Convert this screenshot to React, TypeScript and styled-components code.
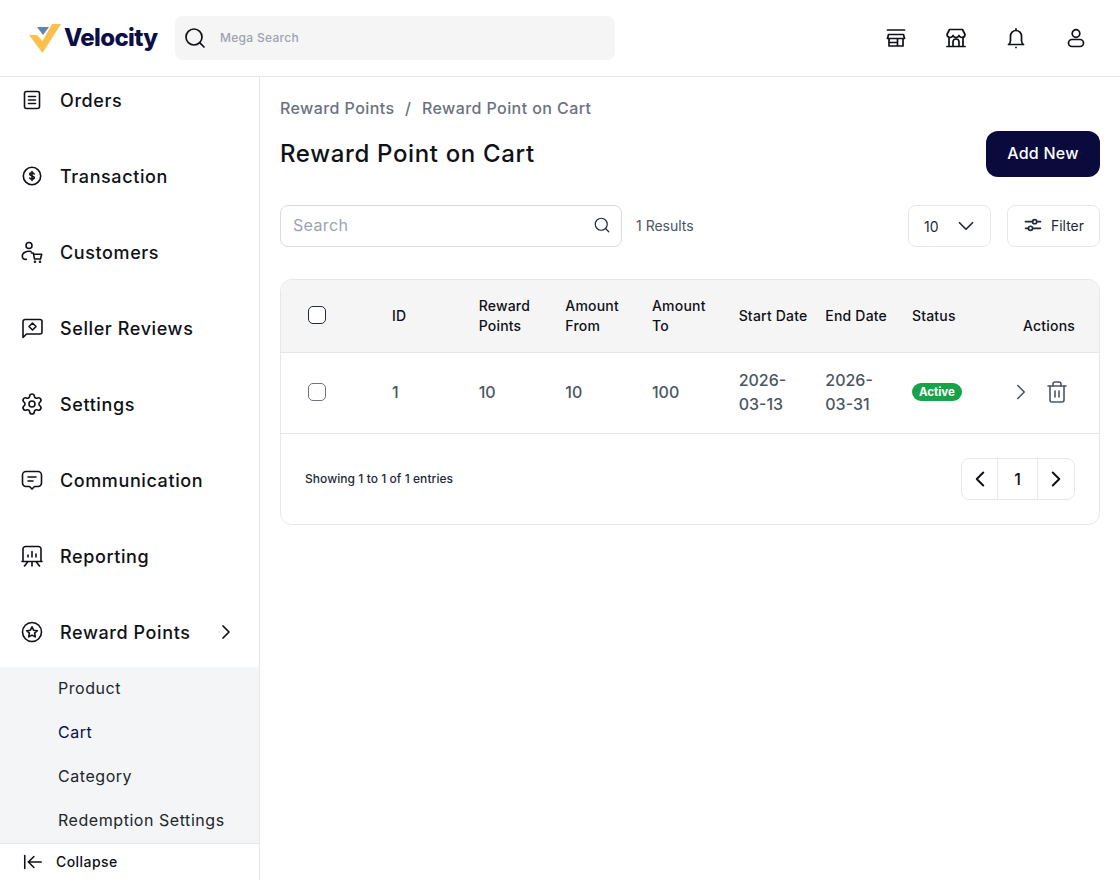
import React from "react";
import styled, {createGlobalStyle} from "styled-components";
import {ArrowLeftToLine, ChevronDown, ChevronLeft, ChevronRight, Search, Settings, Trash2} from "lucide-react";

const GlobalStyle = createGlobalStyle`
  html, body {
    margin: 0;
    height: 880px;
    overflow: hidden;
    background: #fff;
    font-family: Inter, "Liberation Sans", sans-serif;
    color: #0f1117;
  }
  * { box-sizing: border-box; }
`;

const Page = styled.div`
  width: 1120px;
  height: 880px;
  display: flex;
  flex-direction: column;
`;

const Header = styled.header`
  height: 77px;
  flex: none;
  display: flex;
  align-items: center;
  padding: 0 32px 1px 28px;
  border-bottom: 1px solid #e5e7eb;
`;

const Logo = styled.div`
  width: 147px;
  display: flex;
  align-items: center;
  gap: 2px;
`;

const LogoText = styled.span`
  font-size: 24px;
  font-weight: 800;
  letter-spacing: -0.65px;
  color: #0a0f47;
`;

const MegaSearch = styled.div`
  width: 440px;
  height: 44px;
  display: flex;
  align-items: center;
  gap: 13px;
  padding: 0 8px;
  background: #f5f5f5;
  border-radius: 8px;
  font-size: 12px;
  font-weight: 500;
  letter-spacing: 0.3px;
  color: #9ca3af;
`;

const HeaderIcons = styled.div`
  margin-left: auto;
  display: flex;
  gap: 36px;
`;

const Body = styled.div`
  flex: 1;
  display: flex;
  min-height: 0;
`;

const Sidebar = styled.aside`
  width: 260px;
  flex: none;
  display: flex;
  flex-direction: column;
  border-right: 1px solid #e5e7eb;
`;

const NavList = styled.nav`
  flex: 1;
  display: flex;
  flex-direction: column;
  gap: 30px;
`;

const NavItem = styled.div`
  height: 46px;
  flex: none;
  display: flex;
  align-items: center;
  gap: 16px;
  padding: 0 21px 0 20px;
  font-size: 18px;
  font-weight: 500;
  letter-spacing: 0.6px;
  color: #0f1117;
`;

const NavArrow = styled.span`
  margin-left: auto;
  display: flex;
`;

const SubMenu = styled.div`
  margin-top: -18px;
  background: #f3f5f6;
`;

const SubItem = styled.div<{$active?: boolean}>`
  height: 44px;
  display: flex;
  align-items: center;
  padding: 0 0 2px 58px;
  font-size: 16px;
  letter-spacing: 0.55px;
  color: ${p => (p.$active ? "#0a0f47" : "#22252b")};
`;

const Collapse = styled.div`
  height: 37px;
  flex: none;
  display: flex;
  align-items: center;
  gap: 12px;
  padding: 0 0 1px 22px;
  border-top: 1px solid #e5e7eb;
  font-size: 14px;
  font-weight: 500;
  letter-spacing: 0.45px;
`;

const Main = styled.main`
  flex: 1;
  min-width: 0;
  padding: 20px 20px 0;
`;

const Breadcrumb = styled.div`
  display: flex;
  gap: 10.5px;
  height: 24px;
  align-items: center;
  padding-bottom: 2px;
  font-size: 16px;
  font-weight: 500;
  letter-spacing: 0.42px;
  color: #6b7280;
`;

const TitleRow = styled.div`
  margin-top: 10px;
  display: flex;
  align-items: center;
  justify-content: space-between;
`;

const Title = styled.h1`
  margin: 0 0 2px;
  font-size: 24px;
  font-weight: 500;
  letter-spacing: 0.65px;
  color: #0f1117;
`;

const PrimaryButton = styled.button`
  width: 114px;
  height: 46px;
  padding: 0 0 2px;
  border: 0;
  border-radius: 12px;
  background: #0a0a3c;
  color: #fff;
  font: 500 16px Inter, sans-serif;
  letter-spacing: 0.25px;
`;

const Toolbar = styled.div`
  margin-top: 28px;
  display: flex;
  align-items: center;
`;

const SearchBox = styled.div`
  width: 342px;
  height: 42px;
  display: flex;
  align-items: center;
  justify-content: space-between;
  padding: 0 10px 2px 12px;
  border: 1px solid #d9dce1;
  border-radius: 8px;
  font-size: 16px;
  letter-spacing: 0.35px;
  color: #9ca3af;
`;

const ResultCount = styled.span`
  margin: 0 0 2px 14px;
  font-size: 14px;
  color: #4b5563;
`;

const ToolButton = styled.div<{$width: number}>`
  width: ${p => p.$width}px;
  height: 42px;
  display: flex;
  align-items: center;
  justify-content: center;
  gap: 8px;
  padding-bottom: 2px;
  border: 1px solid #e5e7eb;
  border-radius: 8px;
  font-size: 14px;
  color: #1f2937;
`;

const PageSize = styled(ToolButton)`
  margin-left: auto;
  margin-right: 16px;
  justify-content: space-between;
  padding: 0 11px 0 15px;
`;

const Card = styled.section`
  margin-top: 32px;
  border: 1px solid #e5e7eb;
  border-radius: 12px;
  overflow: hidden;
`;

const Table = styled.table`
  width: 100%;
  table-layout: fixed;
  border-collapse: collapse;
`;

const HeadCell = styled.th<{$bottom?: boolean; $right?: boolean}>`
  padding: 16px 3px 16px 14px;
  background: #f5f5f5;
  border-bottom: 1px solid #e5e7eb;
  font-size: 14px;
  font-weight: 500;
  line-height: 20px;
  letter-spacing: 0.2px;
  text-align: ${p => (p.$right ? "right" : "left")};
  vertical-align: ${p => (p.$bottom ? "bottom" : "middle")};
  color: #0f1117;
  ${p => p.$right && "padding-right: 24px;"}
`;

const CheckHead = styled(HeadCell)`
  padding: 15px 0 17px 27px;
`;

const CheckCell = styled.td`
  padding: 0 0 2px 27px;
  border-bottom: 1px solid #e5e7eb;
`;

const Cell = styled.td`
  height: 80px;
  padding: 15px 3px 17px 14px;
  border-bottom: 1px solid #e5e7eb;
  font-size: 16px;
  font-weight: 500;
  line-height: 24px;
  color: #4b5563;
`;

const Check = styled.input<{$dark?: boolean}>`
  appearance: none;
  display: block;
  width: 18px;
  height: 18px;
  margin: 0;
  background: #fff;
  border: 1.5px solid ${p => (p.$dark ? "#1f2937" : "#6b7280")};
  border-radius: 5px;
`;

const Badge = styled.span`
  display: block;
  width: 50px;
  height: 18px;
  border-radius: 9px;
  background: #16a34a;
  color: #fff;
  font-size: 11.5px;
  font-weight: 700;
  line-height: 18px;
  text-align: center;
`;

const Actions = styled.div`
  display: flex;
  align-items: center;
  gap: 11px;
  padding-left: 9px;
  color: #4b5563;
`;

const Footer = styled.div`
  height: 90px;
  display: flex;
  align-items: center;
  justify-content: space-between;
  padding: 0 24px;
  font-size: 12px;
  font-weight: 500;
  letter-spacing: 0.06px;
  color: #1f2937;
`;

const FooterText = styled.span`
  margin-bottom: 2px;
`;

const Pager = styled.div`
  display: flex;
  height: 42px;
  border: 1px solid #e5e7eb;
  border-radius: 8px;
`;

const PagerCell = styled.div<{$width: number}>`
  width: ${p => p.$width}px;
  display: flex;
  align-items: center;
  justify-content: center;
  font-size: 16px;
  font-weight: 500;
  color: #0f1117;
  & + & { border-left: 1px solid #e5e7eb; }
`;

const Line = styled.svg.attrs({
  viewBox: "0 0 24 24",
  fill: "none",
  stroke: "currentColor",
  strokeLinecap: "round",
  strokeLinejoin: "round",
})<{$size?: number; $weight?: number}>`
  width: ${p => p.$size ?? 24}px;
  height: ${p => p.$size ?? 24}px;
  stroke-width: ${p => p.$weight ?? 1.6};
  flex: none;
  display: block;
`;

const VelocityMark = () => (
  <svg width="34" height="32" viewBox="0 0 34 32" style={{flex: "none"}}>
    <polygon points="1,13 9,13 14.5,19 24,2 33,2 14.5,31" fill="#fbbf4d" />
    <polygon points="9,5 21,5 15,13" fill="#5f86a8" />
  </svg>
);

const columns = [
  {key: "id", label: "ID"},
  {key: "points", label: "Reward Points"},
  {key: "from", label: "Amount From"},
  {key: "to", label: "Amount To"},
  {key: "start", label: "Start Date"},
  {key: "end", label: "End Date"},
  {key: "status", label: "Status"},
];

const navItems = [
  {
    label: "Orders",
    icon: <><rect x="4.5" y="3.500" width="15" height="17" rx="2" /><path d="M8.500 8.500h7M8.500 12h7M8.500 15.500h7" /></>,
  },
  {
    label: "Transaction",
    icon: <><circle cx="12" cy="12" r="8.700" /><path d="M14.200 10c-.3-.8-1.200-1.200-2.200-1.200-1.300 0-2.200.6-2.200 1.500 0 2.300 4.500 1 4.500 3.300 0 1-1 1.600-2.300 1.600-1 0-1.900-.4-2.200-1.200M12 7.500v9" /></>,
  },
  {
    label: "Customers",
    icon: <><circle cx="9" cy="5.500" r="3" /><path d="M11 11.500c-4.500-.8-8.700 1.200-8.700 4.500 0 2.300 1.500 3.400 4 3.400M11.500 13h1.800l1.200 6h6l1.200-4.700h-8.200" /><circle cx="15" cy="21.800" r=".5" /><circle cx="20" cy="21.800" r=".5" /></>,
  },
  {
    label: "Seller Reviews",
    icon: <><path d="M3 21.500V5.500a2 2 0 0 1 2-2h15a2 2 0 0 1 2 2V16a2 2 0 0 1-2 2H6.500z" /><path d="M12.500 7l3.500 3.500-3.500 3.500-3.500-3.500z" /></>,
  },
  {
    label: "Communication",
    icon: <><path d="M6 3.500h12a3.500 3.500 0 0 1 3.500 3.500v8a3.500 3.500 0 0 1-3.500 3.500h-3.500L12 21l-2.500-2.500H6A3.500 3.500 0 0 1 2.500 15V7A3.500 3.500 0 0 1 6 3.500z" /><path d="M8 9h8M8 13h5" /></>,
  },
  {
    label: "Reporting",
    icon: <><path d="M3 17V5a2.500 2.500 0 0 1 2.500-2.500h13A2.500 2.500 0 0 1 21 5v12" /><path d="M2 17.500h20M12 17.500V22M8 17.500 4.500 22M16 17.500l3.500 4.500M8 13v-2M12 13V7.500M16 13v-3" /></>,
  },
  {
    label: "Reward Points",
    icon: <><circle cx="12" cy="12" r="9.500" /><path d="m12 6.800 1.600 3.400 3.700.5-2.700 2.500.7 3.700-3.300-1.800-3.300 1.800.7-3.700-2.700-2.500 3.700-.5z" /></>,
  },
];

const subItems = ["Product", "Cart", "Category", "Redemption Settings"];

const App: React.FC = () => {
  return (
    <Page>
      <GlobalStyle />
      <Header>
        <Logo>
          <VelocityMark />
          <LogoText>Velocity</LogoText>
        </Logo>
        <MegaSearch>
          <Search size={24} strokeWidth={1.7} color="#0f1117" />
          Mega Search
        </MegaSearch>
        <HeaderIcons>
          <Line $weight={1.7}>
            <path d="M3.500 4h17M4.500 8.500h15l1 4H3.500zM5 12.500V20h14v-7.500M5 16.500h8.500M13.500 12.500V20" />
          </Line>
          <Line $weight={1.7}>
            <path d="M3 20.500h18M5 20.500V11M19 20.500V11M5.500 3.500h13L21 8.500c0 1.800-1.200 3-3 3-1.300 0-2.500-.7-3-2-.5 1.300-1.700 2-3 2s-2.500-.7-3-2c-.5 1.300-1.700 2-3 2-1.800 0-3-1.200-3-3zM9 20.500V16a3 3 0 0 1 6 0v4.500" />
          </Line>
          <Line $weight={1.7}>
            <path d="M4.500 18.500c1.200-.6 2-2 2-4V10a5.500 5.500 0 0 1 11 0v4.500c0 2 .8 3.400 2 4zM12 2.800v1.700M12 21.300v.2" />
          </Line>
          <Line $weight={1.7}>
            <circle cx="12" cy="7.500" r="3.800" />
            <rect x="4.500" y="13.500" width="15" height="7" rx="3.500" />
          </Line>
        </HeaderIcons>
      </Header>
      <Body>
        <Sidebar>
          <NavList>
            {navItems.slice(0, 4).map(item => (
              <NavItem key={item.label}>
                <Line>{item.icon}</Line>
                {item.label}
              </NavItem>
            ))}
            <NavItem>
              <Settings size={24} strokeWidth={1.6} />
              Settings
            </NavItem>
            {navItems.slice(4).map(item => (
              <NavItem key={item.label}>
                <Line>{item.icon}</Line>
                {item.label}
                {item.label === "Reward Points" && (
                  <NavArrow><ChevronRight size={24} strokeWidth={1.7} /></NavArrow>
                )}
              </NavItem>
            ))}
            <SubMenu>
              {subItems.map(label => (
                <SubItem key={label} $active={label === "Cart"}>{label}</SubItem>
              ))}
            </SubMenu>
          </NavList>
          <Collapse>
            <ArrowLeftToLine size={22} strokeWidth={1.7} />
            Collapse
          </Collapse>
        </Sidebar>
        <Main>
          <Breadcrumb>
            <span>Reward Points</span>
            <span>/</span>
            <span>Reward Point on Cart</span>
          </Breadcrumb>
          <TitleRow>
            <Title>Reward Point on Cart</Title>
            <PrimaryButton>Add New</PrimaryButton>
          </TitleRow>
          <Toolbar>
            <SearchBox>
              Search
              <Search size={18} strokeWidth={1.6} color="#1f2937" />
            </SearchBox>
            <ResultCount>1 Results</ResultCount>
            <PageSize $width={83}>
              10
              <ChevronDown size={26} strokeWidth={1.6} />
            </PageSize>
            <ToolButton $width={93}>
              <Line $size={20} $weight={2}>
                <path d="M3 8h8.500M17 8h4M3 16h3.500M12 16h9" />
                <circle cx="14" cy="8" r="2.500" />
                <circle cx="9" cy="16" r="2.500" />
              </Line>
              Filter
            </ToolButton>
          </Toolbar>
          <Card>
            <Table>
              <colgroup>
                <col style={{width: 97}} />
                {columns.map(c => <col key={c.key} style={{width: 86.67}} />)}
                <col />
              </colgroup>
              <thead>
                <tr>
                  <CheckHead><Check type="checkbox" $dark aria-label="Select all" /></CheckHead>
                  {columns.map(c => <HeadCell key={c.key}>{c.label}</HeadCell>)}
                  <HeadCell $bottom $right>Actions</HeadCell>
                </tr>
              </thead>
              <tbody>
                <tr>
                  <CheckCell><Check type="checkbox" aria-label="Select row" /></CheckCell>
                  <Cell>1</Cell>
                  <Cell>10</Cell>
                  <Cell>10</Cell>
                  <Cell>100</Cell>
                  <Cell>2026-03-13</Cell>
                  <Cell>2026-03-31</Cell>
                  <Cell><Badge>Active</Badge></Cell>
                  <Cell>
                    <Actions>
                      <ChevronRight size={26} strokeWidth={1.5} />
                      <Trash2 size={24} strokeWidth={1.6} />
                    </Actions>
                  </Cell>
                </tr>
              </tbody>
            </Table>
            <Footer>
              <FooterText>Showing 1 to 1 of 1 entries</FooterText>
              <Pager>
                <PagerCell $width={35}><ChevronLeft size={26} strokeWidth={1.8} /></PagerCell>
                <PagerCell $width={40}>1</PagerCell>
                <PagerCell $width={37}><ChevronRight size={26} strokeWidth={1.8} /></PagerCell>
              </Pager>
            </Footer>
          </Card>
        </Main>
      </Body>
    </Page>
  );
};

export default App;
